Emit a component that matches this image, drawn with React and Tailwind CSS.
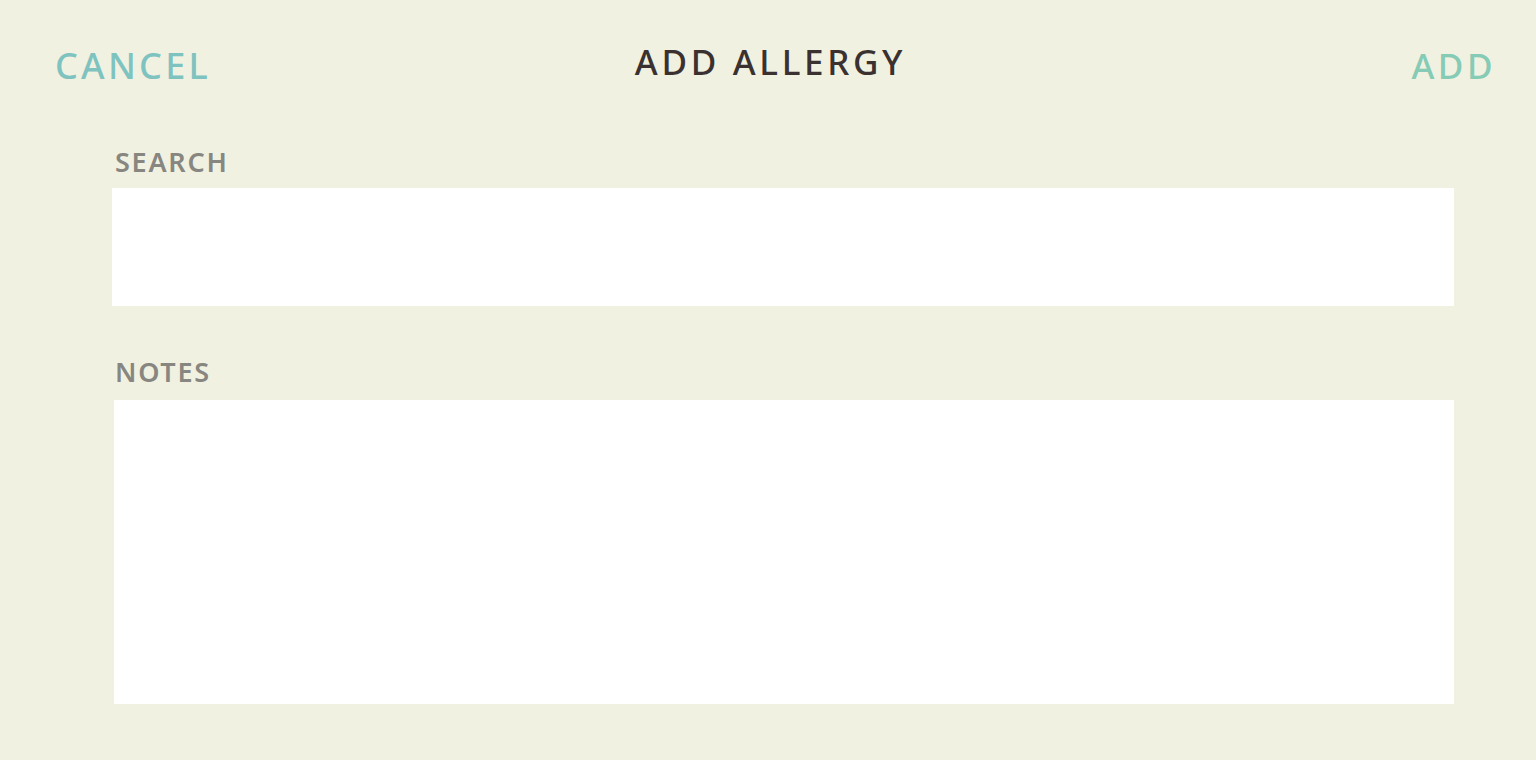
import React from 'react';

const font = { fontFamily: '"Noto Sans", "Open Sans", sans-serif' };

export default function App() {
  return (
    <div className="min-h-screen w-full bg-[#f1f1e1]" style={font}>
      <header className="grid grid-cols-[1fr_auto_1fr] items-start pl-[55px] pr-[40px] pt-[40px]">
        <div className="flex justify-start">
          <button className="mt-[4px] text-[36px] leading-[44px] font-medium tracking-[0.09em] text-[#7fc3c0]">CANCEL</button>
        </div>
        <h1 className="mr-[10px] text-[35px] leading-[44px] font-medium tracking-[0.105em] text-[#3a3130]">ADD ALLERGY</h1>
        <div className="flex justify-end">
          <button className="mt-[4px] text-[35px] leading-[44px] font-medium tracking-[0.1em] text-[#86cbb5]">ADD</button>
        </div>
      </header>
      <main className="flex flex-col pl-[112px] pr-[82px] pt-[58px]">
        <label className="pl-[3px] text-[27px] leading-[32px] font-semibold tracking-[0.065em] text-[#878680]">SEARCH</label>
        <input className="mt-[10px] h-[118px] w-full bg-white outline-none" />
        <label className="mt-[50px] pl-[3px] text-[27px] leading-[32px] font-semibold tracking-[0.065em] text-[#878680]">NOTES</label>
        <textarea className="ml-[2px] mt-[12px] h-[304px] resize-none bg-white outline-none" />
      </main>
    </div>
  );
}
